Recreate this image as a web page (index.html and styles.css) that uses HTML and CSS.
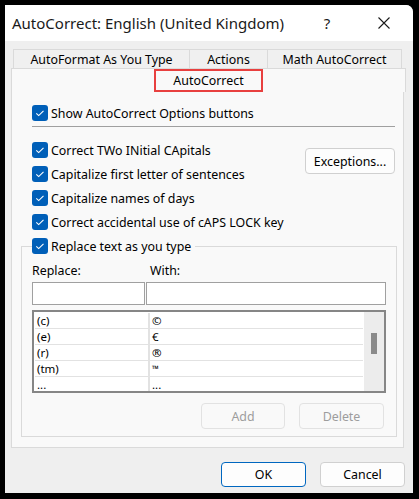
FILE: index.html
```html
<!DOCTYPE html>
<html lang="en">
  <head>
    <meta charset="UTF-8" />
    <title>AutoCorrect</title>
    <link rel="stylesheet" href="styles.css">
  </head>
  <body>
    <div class="window">
      <!-- title bar -->
      <div class="titlebar">
        <span class="title">AutoCorrect: English (United Kingdom)</span>
        <span class="help">?</span>
        <span class="close">
          <svg width="12" height="12" viewBox="0 0 12 12">
            <path d="M0.5 0.5 L11.5 11.5 M11.5 0.5 L0.5 11.5" stroke="#1a1a1a" stroke-width="1.1" fill="none" />
          </svg>
        </span>
      </div>

      <!-- tabs -->
      <div class="tabs">
        <div class="tab-row">
          <div class="tab tab-format">AutoFormat As You Type</div>
          <div class="tab tab-actions">Actions</div>
          <div class="tab tab-math">Math AutoCorrect</div>
        </div>
        <div class="tab-front">
          <span class="tab-current">AutoCorrect</span>
        </div>
      </div>

      <!-- panel -->
      <div class="panel">
        <label class="check">
          <span class="box"><svg width="16" height="16" viewBox="0 0 16 16"><path d="M4.3 8.3 L6.7 10.6 L11.5 5.8" stroke="#fff" stroke-width="1.1" fill="none" /></svg></span>
          Show AutoCorrect Options buttons
        </label>
        <div class="sep"></div>

        <div class="options">
          <div class="option-list">
            <label class="check">
              <span class="box"><svg width="16" height="16" viewBox="0 0 16 16"><path d="M4.3 8.3 L6.7 10.6 L11.5 5.8" stroke="#fff" stroke-width="1.1" fill="none" /></svg></span>
              Correct TWo INitial CApitals
            </label>
            <label class="check">
              <span class="box"><svg width="16" height="16" viewBox="0 0 16 16"><path d="M4.3 8.3 L6.7 10.6 L11.5 5.8" stroke="#fff" stroke-width="1.1" fill="none" /></svg></span>
              Capitalize first letter of sentences
            </label>
            <label class="check">
              <span class="box"><svg width="16" height="16" viewBox="0 0 16 16"><path d="M4.3 8.3 L6.7 10.6 L11.5 5.8" stroke="#fff" stroke-width="1.1" fill="none" /></svg></span>
              Capitalize names of days
            </label>
            <label class="check">
              <span class="box"><svg width="16" height="16" viewBox="0 0 16 16"><path d="M4.3 8.3 L6.7 10.6 L11.5 5.8" stroke="#fff" stroke-width="1.1" fill="none" /></svg></span>
              Correct accidental use of cAPS LOCK key
            </label>
          </div>
          <button class="btn btn-exceptions">Exceptions...</button>
        </div>

        <fieldset class="group">
          <legend>
            <label class="check">
              <span class="box"><svg width="16" height="16" viewBox="0 0 16 16"><path d="M4.3 8.3 L6.7 10.6 L11.5 5.8" stroke="#fff" stroke-width="1.1" fill="none" /></svg></span>
              Replace text as you type
            </label>
          </legend>

          <div class="fields">
            <div class="field field-replace">
              <div class="field-label">Replace:</div>
              <div class="input"></div>
            </div>
            <div class="field field-with">
              <div class="field-label">With:</div>
              <div class="input"></div>
            </div>
          </div>

          <div class="list">
            <table class="entries">
              <tr><td class="c1">(c)</td><td>©</td></tr>
              <tr><td class="c1">(e)</td><td>€</td></tr>
              <tr><td class="c1">(r)</td><td>®</td></tr>
              <tr><td class="c1">(tm)</td><td class="tm">™</td></tr>
              <tr><td class="c1">...</td><td>...</td></tr>
            </table>
            <div class="scrollbar"><div class="thumb"></div></div>
          </div>

          <div class="list-actions">
            <button class="btn btn-disabled">Add</button>
            <button class="btn btn-disabled">Delete</button>
          </div>
        </fieldset>
      </div>

      <!-- footer -->
      <div class="footer">
        <button class="btn btn-primary">OK</button>
        <button class="btn">Cancel</button>
      </div>
    </div>
  </body>
</html>
```

FILE: styles.css
```css
body {
  margin: 0;
  padding: 5px 0 0 5px;
  height: 499px;
  box-sizing: border-box;
  background: #000;
  font-family: "Noto Sans", "Open Sans", sans-serif;
  font-size: 12.4px;
  color: #000;
}

/* dialog window */
.window {
  width: 408px;
  height: 488px;
  background: #efefef;
  border-top-right-radius: 7px;
  overflow: hidden;
  display: flex;
  flex-direction: column;
}

.titlebar {
  height: 36px;
  background: #fff;
  display: flex;
  align-items: center;
  padding-left: 7px;
  flex-shrink: 0;
}
.title {
  font-size: 15px;
  color: #1a1a1a;
}
.help {
  margin-left: auto;
  width: 46px;
  text-align: center;
  font-size: 15px;
  color: #1a1a1a;
}
.close {
  width: 46px;
  margin-left: 11px;
  margin-right: 6px;
  display: flex;
  justify-content: center;
}

/* tabs */
.tabs {
  margin-top: 8px;
  padding-left: 6px;
}
.tab-row {
  display: flex;
  margin-left: 2px;
  height: 19px;
}
.tab {
  border: 1px solid #dadada;
  border-bottom: none;
  background: #f0f0f0;
  text-align: center;
  line-height: 19px;
  box-sizing: border-box;
  height: 19px;
}
.tab + .tab {
  border-left: none;
}
.tab-format { width: 177px; }
.tab-actions { width: 78px; }
.tab-math { width: 134px; }

.tab-front {
  width: 395px;
  height: 24px;
  box-sizing: border-box;
  background: #f9f9f9;
  border: 1px solid #dadada;
  border-bottom: none;
  text-align: center;
}
.tab-current {
  display: inline-block;
  box-sizing: border-box;
  width: 109px;
  height: 23px;
  line-height: 19px;
  border: 2px solid #e8403f;
}

/* panel */
.panel {
  width: 393px;
  box-sizing: border-box;
  margin-left: 6px;
  background: #f9f9f9;
  border: 1px solid #dadada;
  border-top: none;
  padding: 13px 8px 10px 20px;
}

.check {
  display: flex;
  align-items: center;
  height: 16px;
  white-space: nowrap;
}
.box {
  width: 16px;
  height: 16px;
  border-radius: 3px;
  background: #005fb8;
  margin-right: 3px;
  flex-shrink: 0;
}
.box svg {
  display: block;
}

.sep {
  height: 1px;
  background: #a0a0a0;
  margin-top: 5px;
}

.options {
  display: flex;
  margin-top: 15px;
}
.option-list {
  display: flex;
  flex-direction: column;
  gap: 8px;
}

.btn {
  font-family: inherit;
  font-size: 12.4px;
  color: #000;
  background: #fdfdfd;
  border: 1px solid #d0d0d0;
  border-radius: 4px;
  padding: 0;
  height: 26px;
  width: 85px;
}
.btn-exceptions {
  margin: 6px 0 0 auto;
  width: 90px;
}
.btn-disabled {
  color: #9d9d9d;
  background: #f9f9f9;
  border-color: #e2e2e2;
}
.btn-primary {
  border-color: #0067c0;
}

/* replace group */
.group {
  margin: 8px -2px 0 -11px;
  padding: 0 10px 7px 10px;
  border: 1px solid #dadada;
}
.group legend {
  padding: 0 4px 0 0;
}

.fields {
  display: flex;
  gap: 1px;
  margin-top: 8px;
}
.field-label {
  line-height: 18px;
  margin-bottom: 2px;
}
.field-replace { width: 113px; }
.field-with { flex: 1; }
.field-with .field-label { padding-left: 4px; }
.input {
  height: 23px;
  box-sizing: border-box;
  background: #fff;
  border: 1px solid #a0a0a0;
}

.list {
  margin-top: 5px;
  height: 83px;
  box-sizing: border-box;
  border: 2px solid #868686;
  background: #fff;
  display: flex;
  padding: 1px;
  overflow: hidden;
}
.entries {
  flex: 1;
  border-collapse: collapse;
  align-self: flex-start;
  font-size: 11.5px;
}
.entries td {
  height: 15px;
  padding: 0 0 0 2px;
  line-height: 15px;
  border-bottom: 1px solid #e2e2e2;
  vertical-align: bottom;
}
.entries td.c1 {
  width: 111px;
  border-right: 2px solid #e2e2e2;
}
.entries td.tm {
  font-size: 9px;
  vertical-align: top;
}
.scrollbar {
  width: 20px;
  background: #ececec;
  margin: -1px -1px -1px 1px;
  display: flex;
  justify-content: center;
  padding-top: 21px;
}
.thumb {
  width: 6px;
  height: 21px;
  background: #8a8a8a;
}

.list-actions {
  display: flex;
  justify-content: flex-end;
  gap: 14px;
  margin: 10px 2px 0 0;
}
.list-actions .btn:first-child { width: 84px; }

/* footer */
.footer {
  display: flex;
  justify-content: flex-end;
  gap: 14px;
  padding: 14px 8px 0 0;
}
.footer .btn {
  height: 25px;
}
```
